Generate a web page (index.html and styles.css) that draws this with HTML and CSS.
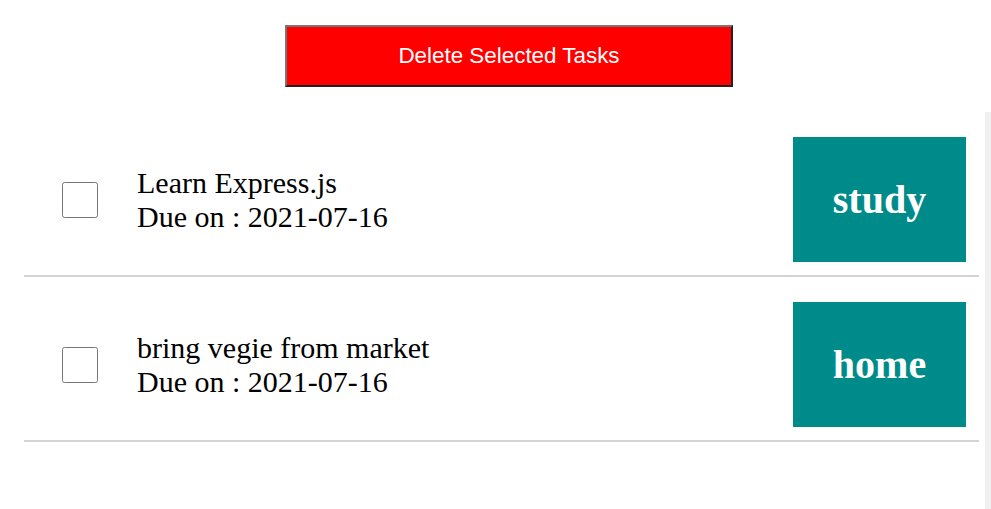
FILE: index.html
```html
<!DOCTYPE html>
<html>
<head>
<meta charset="utf-8">
<link rel="stylesheet" href="styles.css">
</head>
<body>
<div class="toolbar">
  <button class="delete-btn">Delete Selected Tasks</button>
</div>
<div class="board">
  <ul class="task-list">
    <li class="task">
      <input type="checkbox" class="task-check">
      <div class="task-info">
        <div class="task-name">Learn Express.js</div>
        <div class="task-due">Due on : 2021-07-16</div>
      </div>
      <div class="tag">study</div>
    </li>
    <li class="task">
      <input type="checkbox" class="task-check">
      <div class="task-info">
        <div class="task-name">bring vegie from market</div>
        <div class="task-due">Due on : 2021-07-16</div>
      </div>
      <div class="tag">home</div>
    </li>
  </ul>
  <div class="track"></div>
</div>
</body>
</html>
```
FILE: styles.css
```css
html, body {
  margin: 0;
  padding: 0;
  background: #fff;
  font-family: "Liberation Serif", "Times New Roman", serif;
  overflow: hidden;
}
.toolbar {
  padding: 25px 0 0 285px;
  height: 62px;
}
.delete-btn {
  box-sizing: border-box;
  width: 448px;
  height: 62px;
  background: #ff0000;
  color: #fff;
  font-family: "Liberation Sans", Arial, sans-serif;
  font-size: 22.4px;
  border-style: solid;
  border-width: 2px;
  border-color: #767676 #222 #222 #767676;
  padding: 0;
  margin: 0;
}
.board {
  margin-top: 25px;
  display: grid;
  grid-template-columns: 955px 6px;
  column-gap: 6px;
  padding-left: 24px;
  height: calc(100vh - 112px);
}
.task-list {
  list-style: none;
  margin: 0;
  padding: 0;
}
.task {
  display: flex;
  align-items: center;
  padding: 25px 13px 13px 38px;
  border-bottom: 2px solid #d3d3d3;
}
.task-check {
  width: 36px;
  height: 36px;
  margin: 0 39px 0 0;
}
.task-info {
  flex: 1;
  font-size: 30px;
  line-height: 34px;
  color: #000;
}
.tag {
  width: 173px;
  height: 125px;
  background: #008b8b;
  color: #fff;
  font-weight: bold;
  font-size: 40px;
  display: flex;
  align-items: center;
  justify-content: center;
}
.track {
  background: #f0f0f0;
}
```
